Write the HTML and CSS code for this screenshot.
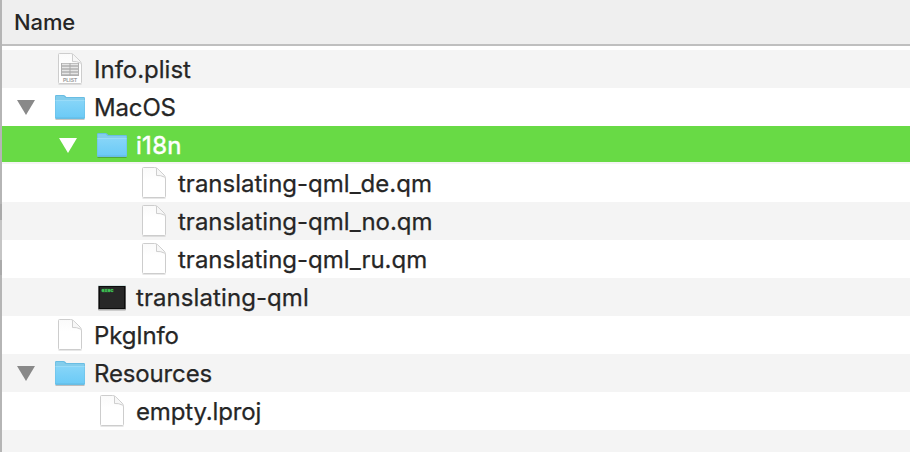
FILE: index.html
```html
<!DOCTYPE html>
<html lang="en">
<head>
<meta charset="utf-8">
<title>Files</title>
<link rel="stylesheet" href="styles.css">
</head>
<body>
<svg width="0" height="0" class="defs" aria-hidden="true">
  <defs>
    <linearGradient id="blue" x1="0" y1="0" x2="0" y2="1"><stop offset="0" stop-color="#87d5f8"/><stop offset="1" stop-color="#6bcaf6"/></linearGradient>
    <linearGradient id="paper" x1="0" y1="0" x2="0" y2="1"><stop offset="0" stop-color="#fafafa"/><stop offset=".4" stop-color="#fff"/></linearGradient>
    <symbol id="arrow" viewBox="0 0 18 15"><path d="M0 0H18L9 15Z" fill="currentColor"/></symbol>
    <symbol id="folder" viewBox="0 0 32 38">
      <path d="M1.5 31.5H30.5" stroke="#000" stroke-opacity=".22"/>
      <path d="M1 11V8.2Q1 7 2.2 7H9.5Q10.5 7 11.2 7.8L12.4 9H29.8Q31 9 31 10.2V30Q31 31 29.8 31H2.2Q1 31 1 30Z" fill="#69bde3"/>
      <path d="M1.7 10.7V8.6Q1.7 8 2.3 8H9.7L11.7 10H30.3V12H1.7Z" fill="#83cdec"/>
      <path d="M1.5 12H30.5V30H1.5Z" fill="url(#blue)"/>
      <path d="M1.5 12.5H30.5" stroke="#a1def8" stroke-opacity=".7"/>
      <path d="M1.5 29.5H30.5" stroke="#61b9e1" stroke-opacity=".5"/>
    </symbol>
    <symbol id="doc" viewBox="0 0 32 38">
      <path d="M4.5 34.2H27.5" stroke="#000" stroke-opacity=".14"/>
      <path d="M4.5 4.5Q4.5 3.5 5.5 3.5H16.5Q18 3.5 19.2 4.4L26 11Q27.5 12.5 27.5 15V32.5Q27.5 33.5 26.5 33.5H5.5Q4.5 33.5 4.5 32.5Z" fill="url(#paper)" stroke="#cdcdcd"/>
      <path d="M18.5 4.2V11.5Q22.5 11 26.8 13.2" fill="#f7f7f7" stroke="#c8c8c8" stroke-width=".9"/>
    </symbol>
    <symbol id="plist" viewBox="0 0 32 38">
      <use href="#doc" width="32" height="38"/>
      <rect x="7" y="13" width="18" height="13" fill="#b0b0b0"/>
      <path d="M8 14.5H24M8 17.5H24M8 20.5H24M8 23.5H24" stroke="#e6e6e6" stroke-width="1.5"/>
      <path d="M16 13V26" stroke="#aaa"/>
      <text x="16" y="32" class="plist-label">PLIST</text>
    </symbol>
    <symbol id="exec" viewBox="0 0 32 38">
      <rect x="2" y="8" width="28" height="24.5" rx="1" fill="#777" fill-opacity=".6"/>
      <rect x="2" y="7" width="28" height="1" fill="#d4e4e2"/>
      <rect x="2.5" y="8" width="27" height="23" fill="#0c0c0c"/>
      <rect x="4" y="9" width="24" height="21" fill="#272727"/>
      <text x="5.5" y="14" class="exec-label">exec</text>
    </symbol>
  </defs>
</svg>
<main class="finder">
  <header class="header">Name</header>
  <ul class="rows">
    <li class="row"><span class="toggle"></span><svg class="icon"><use href="#plist"/></svg><span class="name">Info.plist</span></li>
    <li class="row"><span class="toggle"><svg class="arrow"><use href="#arrow"/></svg></span><svg class="icon"><use href="#folder"/></svg><span class="name snug">MacOS</span></li>
    <li class="row level-1 selected"><span class="toggle"><svg class="arrow"><use href="#arrow"/></svg></span><svg class="icon"><use href="#folder"/></svg><span class="name">i18n</span></li>
    <li class="row level-2"><span class="toggle"></span><svg class="icon"><use href="#doc"/></svg><span class="name">translating-qml_de.qm</span></li>
    <li class="row level-2"><span class="toggle"></span><svg class="icon"><use href="#doc"/></svg><span class="name">translating-qml_no.qm</span></li>
    <li class="row level-2"><span class="toggle"></span><svg class="icon"><use href="#doc"/></svg><span class="name">translating-qml_ru.qm</span></li>
    <li class="row level-1"><span class="toggle"></span><svg class="icon"><use href="#exec"/></svg><span class="name airy">translating-qml</span></li>
    <li class="row"><span class="toggle"></span><svg class="icon"><use href="#doc"/></svg><span class="name snug">PkgInfo</span></li>
    <li class="row"><span class="toggle"><svg class="arrow"><use href="#arrow"/></svg></span><svg class="icon"><use href="#folder"/></svg><span class="name snug">Resources</span></li>
    <li class="row level-1"><span class="toggle"></span><svg class="icon"><use href="#doc"/></svg><span class="name snug">empty.lproj</span></li>
    <li class="row"></li>
  </ul>
</main>
</body>
</html>
```
FILE: styles.css
```css
* { box-sizing: border-box; }
body {
  margin: 0;
  height: 452px;
  overflow: hidden;
  background: linear-gradient(#b5b5b5 0 204px, #aaa 204px 220px, #c5c5c5 220px 260px, #aaa 260px 275px, #b5b5b5 275px);
  font-family: Inter, "Liberation Sans", sans-serif;
  color: #262626;
}
.defs { display: block; }
.finder { height: 452px; margin-left: 2px; overflow: hidden; background: #fff; }
.header {
  height: 46px;
  padding-left: 12px;
  border-bottom: 2px solid #bfbfbf;
  background: #efefef;
  font-size: 22px;
  font-weight: 500;
  letter-spacing: -0.1px;
  line-height: 44px;
}
.rows { list-style: none; margin: 4px 0 0; padding: 0; }
.row { display: flex; height: 38px; padding-left: 15px; background: #fff; }
.row:nth-child(odd) { background: #f4f4f4; }
.level-1 { padding-left: 57px; }
.level-2 { padding-left: 99px; }
.row.selected { background: #68da45; border-bottom: 2px solid #f4f4f4; color: #fff; }
.toggle { flex: none; width: 37px; height: 36px; padding-top: 12px; color: #898989; }
.selected .toggle { color: #fff; }
.arrow { display: block; width: 18px; height: 15px; }
.icon { flex: none; width: 32px; height: 38px; }
.name { margin-left: 8px; font-size: 24px; line-height: 40px; white-space: nowrap; -webkit-text-stroke: 0.25px currentColor; }
.selected .name { letter-spacing: 0.3px; -webkit-text-stroke-width: 0.5px; }
.snug { letter-spacing: -0.15px; }
.airy { letter-spacing: 0.08px; }
.plist-label { font: 700 5px "Liberation Sans", sans-serif; fill: #999; text-anchor: middle; }
.exec-label { font: 700 5px "Liberation Mono", monospace; fill: #3fc656; stroke: #3fc656; stroke-width: .3px; }
```
